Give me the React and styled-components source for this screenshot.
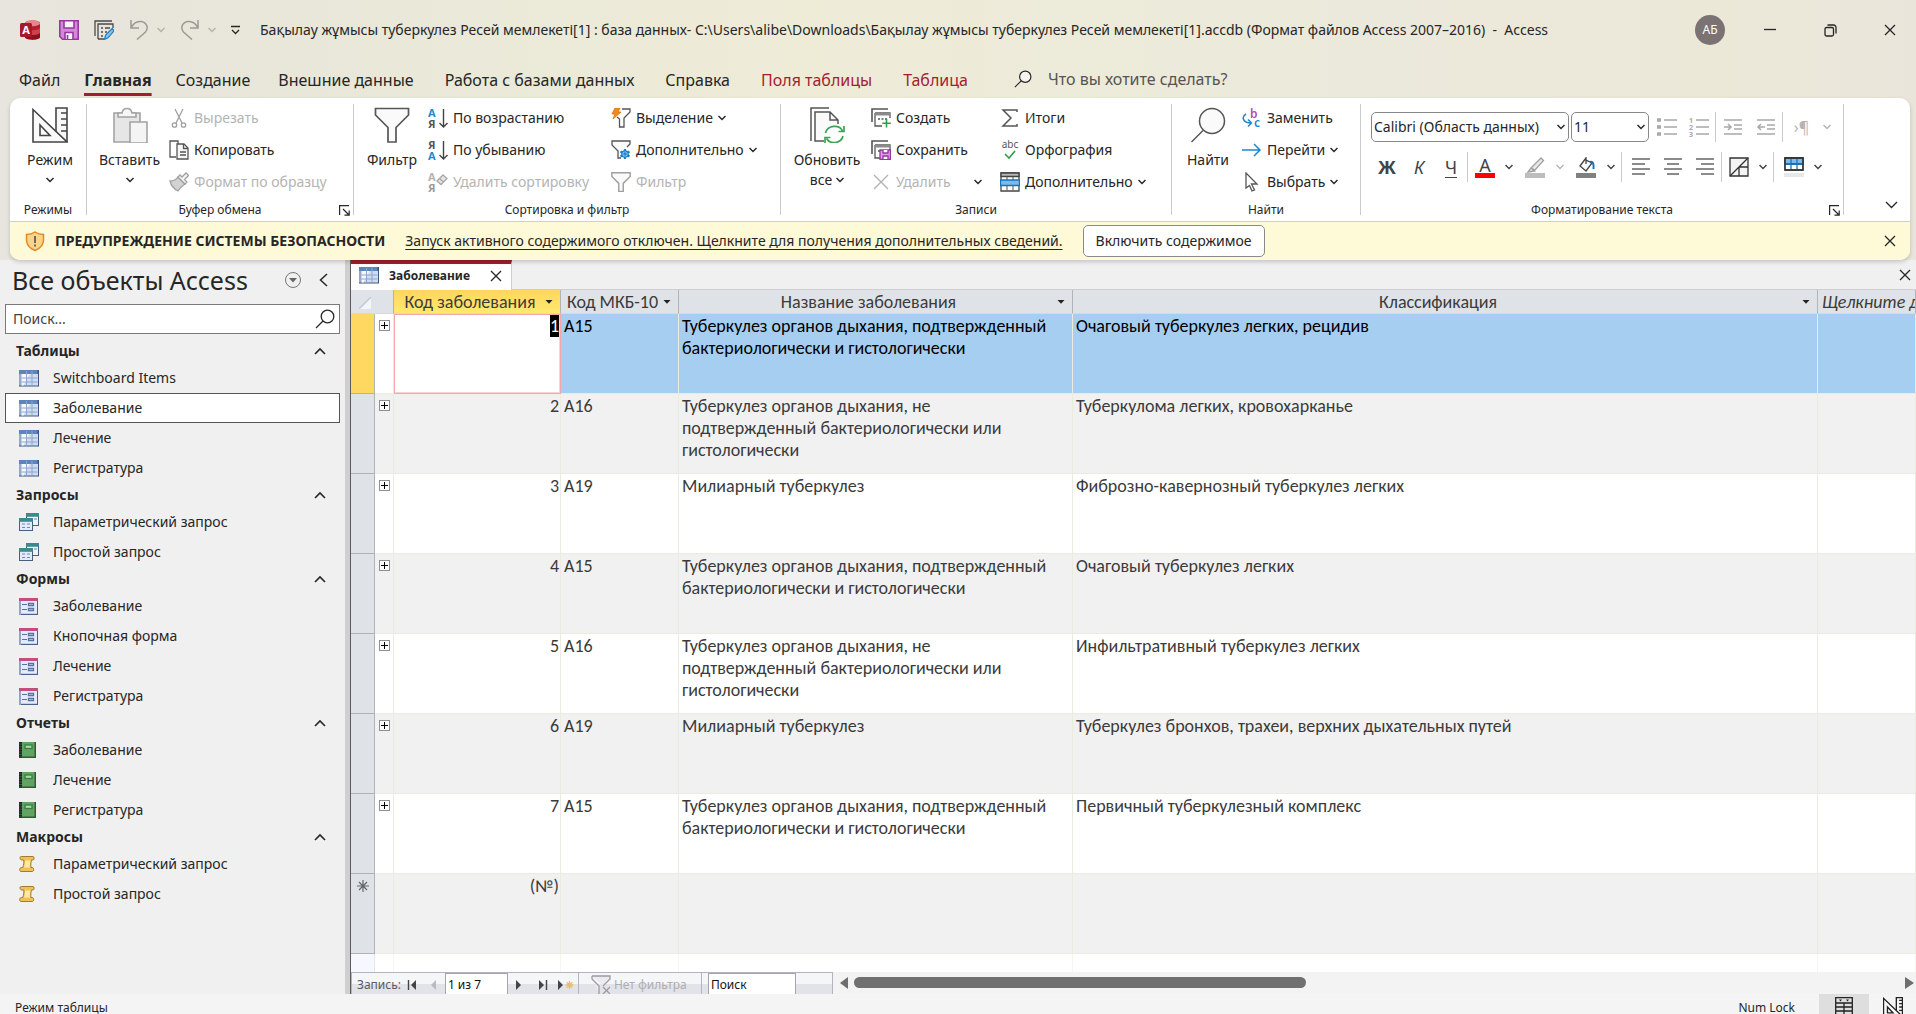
import React from "react";
import styled, { createGlobalStyle, css } from "styled-components";

const ui = '"Noto Sans", "Open Sans", sans-serif';
const dataFont = 'Carlito, Calibri, Lato, sans-serif';
const red = "#a31d2f";
const ink = "#262626";
const faint = "#b4b4b4";

const GlobalStyle = createGlobalStyle`
  *, *::before, *::after { box-sizing: border-box; }
  html, body { margin: 0; height: 100%; overflow: hidden; }
  body { font: 14px/20px ${ui}; color: ${ink}; background: #f0f0f0; }
  button, input, select { font: inherit; color: inherit; margin: 0; }
  button { border: 0; padding: 0; background: none; cursor: pointer; }
  ul { list-style: none; margin: 0; padding: 0; }
  h1, h2, p { margin: 0; }
  svg { display: block; flex: none; }
`;

const Window = styled.div`
  display: flex;
  flex-direction: column;
  height: 100vh;
  overflow: hidden;
`;

const Head = styled.header`
  background: linear-gradient(90deg, #e7e5dd 0%, #e9e7d9 16%, #eeecd7 42%, #ebe9db 72%, #ece8d8 90%, #e9e5da 100%);
`;

/* ---------- title bar ---------- */
const TitleBar = styled.div`
  display: flex;
  align-items: center;
  height: 60px;
  padding: 0 20px;
`;
const QuickBar = styled.div`
  display: flex;
  align-items: center;
  gap: 15px;
  width: 240px;
  flex: none;
  > svg { margin-right: 4px; }
`;
const UndoPair = styled.span`
  display: flex;
  align-items: center;
  gap: 8px;
`;
const PlainButton = styled.button`
  display: inline-flex;
  align-items: center;
  justify-content: center;
  color: ${(p) => (p.disabled ? faint : ink)};
`;
const Title = styled.h1`
  flex: 1;
  font-size: 14px;
  font-weight: 400;
  white-space: pre;
`;
const Avatar = styled.button`
  width: 30px;
  height: 30px;
  border-radius: 50%;
  background: #7b7373;
  color: #fff;
  font-size: 12px;
`;
const WindowButtons = styled.div`
  display: flex;
  align-items: center;
  margin-left: 15px;
  button { width: 60px; height: 40px; }
  button:last-child { justify-content: flex-end; width: 36px; }
`;

/* ---------- ribbon tabs ---------- */
const TabBar = styled.nav`
  display: flex;
  height: 38px;
  padding-left: 19px;
`;
const TabSet = styled.ul`
  display: flex;
  gap: ${(p) => p.$gap}px;
  margin-right: 28px;
`;
const Tab = styled.a`
  display: block;
  height: 36px;
  padding-top: 8px;
  font-size: 16px;
  line-height: 24px;
  text-decoration: none;
  color: ${(p) => (p.$context ? red : ink)};
  ${(p) =>
    p.$active &&
    css`
      font-weight: 700;
      background: linear-gradient(${red}, ${red}) bottom / 100% 3px no-repeat;
    `}
`;
const TellMe = styled.label`
  display: flex;
  align-items: center;
  gap: 16px;
  height: 38px;
  margin-left: 18px;
  input {
    width: 240px;
    border: 0;
    padding: 0;
    background: none;
    font-size: 16px;
    outline: 0;
  }
  input::placeholder { color: #555; opacity: 1; }
`;

/* ---------- ribbon ---------- */
const RibbonCard = styled.div`
  position: relative;
  z-index: 2;
  margin: 0 6px 0 10px;
  border-radius: 10px;
  background: #fff;
  box-shadow: 0 2px 4px rgba(0, 0, 0, 0.18);
  overflow: hidden;
`;
const Ribbon = styled.div`
  display: flex;
  height: 124px;
  padding: 6px 0;
  border-bottom: 1px solid #cfcfcf;
`;
const GroupBox = styled.section`
  display: flex;
  flex-direction: column;
  width: ${(p) => p.$w}px;
  flex: none;
  border-right: 1px solid #cbcbcb;
`;
const GroupBody = styled.div`
  display: flex;
  flex: none;
  height: 94px;
  padding-left: ${(p) => p.$pad || 0}px;
`;
const GroupFoot = styled.div`
  display: flex;
  align-items: center;
  flex: none;
  height: 24px;
  h2 {
    flex: 1;
    font-size: 12px;
    font-weight: 400;
    text-align: center;
  }
  button { margin: 0 3px 0 -14px; }
`;
const Big = styled.button`
  display: flex;
  flex-direction: column;
  align-items: center;
  width: ${(p) => p.$w}px;
  height: 94px;
  padding-top: 3px;
  flex: none;
  svg.pic { margin-bottom: 7px; }
  svg.drop { margin-top: 7px; }
`;
const Line = styled.span`
  display: flex;
  align-items: center;
  gap: 4px;
`;
const Stack = styled.div`
  display: flex;
  flex-direction: column;
  width: ${(p) => p.$w}px;
  flex: none;
  margin-top: -2px;
  ${Big} + & { margin-left: 7px; }
`;
const Small = styled.button`
  display: flex;
  align-items: center;
  gap: 5px;
  height: 32px;
  white-space: nowrap;
  color: ${(p) => (p.disabled ? faint : ink)};
  .end { margin-left: 18px; color: ${ink}; }
`;
const Muted = styled.span`
  color: ${faint};
`;
const FormatArea = styled.div`
  display: flex;
  flex-direction: column;
  gap: 10px;
  padding: 8px 0 0 10px;
`;
const FormatRow = styled.div`
  display: flex;
  align-items: center;
  height: 30px;
`;
const Picker = styled.label`
  position: relative;
  display: block;
  width: ${(p) => p.$w}px;
  height: 30px;
  margin-right: 2px;
  svg { position: absolute; right: 4px; top: 12px; pointer-events: none; }
  select {
    appearance: none;
    width: 100%;
    height: 30px;
    padding: 0 2px;
    border: 1px solid #888;
    border-radius: 5px;
    background: #fff;
  }
`;
const Tool = styled.button`
  display: flex;
  align-items: center;
  justify-content: center;
  width: ${(p) => p.$w || 32}px;
  height: 30px;
  color: ${(p) => (p.disabled ? faint : "#444")};
`;
const Rule = styled.span`
  width: 1px;
  height: 30px;
  background: #cbcbcb;
  margin: 0 ${(p) => p.$m || 0}px;
`;
const Glyph = styled.span`
  font-size: ${(p) => (p.$small ? 16 : 18)}px;
  line-height: 24px;
  font-weight: ${(p) => (p.$bold ? 700 : 400)};
  font-style: ${(p) => (p.$italic ? "italic" : "normal")};
  text-decoration: ${(p) => (p.$under ? "underline" : "none")};
  text-underline-offset: 3px;
`;
const Swatch = styled.span`
  display: flex;
  flex-direction: column;
  align-items: center;
  width: 20px;
  border-bottom: 5px solid ${(p) => p.$c};
  font-size: 18px;
  line-height: 16px;
`;
const RibbonEnd = styled.div`
  display: flex;
  flex: 1;
  align-items: flex-end;
  justify-content: flex-end;
  padding: 0 12px 6px 0;
`;
const Warning = styled.div`
  display: flex;
  align-items: center;
  height: 38px;
  padding: 0 14px 0 15px;
  background: #fef9d6;
  strong { margin: 0 20px 0 10px; }
  a { color: ${ink}; text-underline-offset: 3px; }
  > button:last-child { margin-left: auto; }
`;
const Enable = styled.button`
  height: 32px;
  margin-left: 20px;
  padding: 0 12px;
  border: 1px solid #8a8a8a;
  border-radius: 5px;
  background: #fff;
`;

/* ---------- body ---------- */
const Main = styled.main`
  display: flex;
  flex: 1;
  min-height: 0;
`;
const Sidebar = styled.aside`
  width: 351px;
  flex: none;
  padding: 0 5px;
  background: #f0f0f0;
  border-right: 1px solid #5c5c5c;
  box-shadow: inset -5px 0 #cfcfcf;
`;
const SideTitle = styled.div`
  display: flex;
  align-items: center;
  height: 44px;
  padding: 0 17px 4px 7px;
  gap: 18px;
  h2 {
    flex: 1;
    font-size: 25px;
    font-weight: 400;
    line-height: 34px;
  }
`;
const SideSearch = styled.label`
  display: flex;
  align-items: center;
  width: 335px;
  height: 30px;
  margin-bottom: 5px;
  padding: 0 4px 0 7px;
  border: 1px solid #7a7a7a;
  background: #fff;
  input {
    flex: 1;
    min-width: 0;
    border: 0;
    padding: 0;
    outline: 0;
  }
  input::placeholder { color: #444; opacity: 1; }
`;
const SideGroup = styled.button`
  display: flex;
  align-items: center;
  justify-content: space-between;
  width: 335px;
  height: 24px;
  padding: 0 14px 0 11px;
  font-weight: 700;
`;
const SideItem = styled.a`
  display: flex;
  align-items: center;
  gap: 14px;
  width: 335px;
  height: 30px;
  padding-left: 13px;
  border: 1px solid ${(p) => (p.$on ? "#555" : "transparent")};
  background: ${(p) => (p.$on ? "#fff" : "none")};
  color: ${ink};
  text-decoration: none;
`;

const Doc = styled.section`
  display: flex;
  flex-direction: column;
  flex: 1;
  min-width: 0;
  background: #fff;
`;
const DocTabs = styled.div`
  display: flex;
  justify-content: space-between;
  align-items: center;
  height: 30px;
  padding-right: 5px;
  background: #f0f0f0;
  border-bottom: 1px solid #cdcfd1;
`;
const DocTab = styled.div`
  display: flex;
  align-items: center;
  height: 30px;
  width: 161px;
  padding: 0 9px 2px 8px;
  border-top: 4px solid ${red};
  border-right: 1px solid #cdcfd1;
  background: #fff;
  font-size: 12px;
  font-weight: 700;
  span { flex: 1; margin-left: 10px; }
`;
const SheetArea = styled.div`
  flex: 1;
  min-height: 0;
  overflow: hidden;
`;
const Sheet = styled.table`
  width: 100%;
  table-layout: fixed;
  border-spacing: 0;
  font-family: ${dataFont};
  font-size: 18px;
  line-height: 22px;
  color: #3b3b3b;
`;
const HeadCell = styled.th`
  height: 24px;
  padding: 0;
  overflow: hidden;
  white-space: nowrap;
  font-weight: 400;
  font-style: ${(p) => (p.$add ? "italic" : "normal")};
  text-align: left;
  background: ${(p) => (p.$on ? "linear-gradient(#ffd65c, #ffe96f)" : "#dfe2e7")};
  border-right: 1px solid ${(p) => (p.$bare ? "transparent" : "#b0b3b9")};
  border-bottom: 1px solid #d9d9d6;
`;
const HeadButton = styled.button`
  display: flex;
  align-items: center;
  width: 100%;
  height: 23px;
  padding: 0 4px;
  line-height: 22px;
  font-style: inherit;
  span { flex: 1; text-align: ${(p) => (p.$start ? "left" : "center")}; }
`;
const Row = styled.tr`
  height: 80px;
  background: ${(p) => (p.$on ? "#a5cef1" : p.$alt ? "#f1f1f1" : "#fff")};
  color: ${(p) => (p.$on ? "#000" : "inherit")};
`;
const Cell = styled.td`
  height: 80px;
  padding: 1px ${(p) => (p.$num ? 1 : p.$wrap ? 16 : 3)}px 1px 3px;
  vertical-align: top;
  text-align: ${(p) => (p.$num ? "right" : "left")};
  border-right: 1px solid #ebebe0;
  border-bottom: 1px solid #ebebe0;
  ${(p) =>
    p.$focus &&
    css`
      background: #fff;
      border-color: #f4a6ab;
      box-shadow: inset 1px 1px #f4a6ab, inset -1px -1px #f9d0d3;
    `}
`;
const Selector = styled.td`
  height: 80px;
  padding: 6px;
  vertical-align: top;
  background: ${(p) => (p.$on ? "#ffd861" : "#dfe2e7")};
  border-right: 1px solid #aeb2b9;
  border-bottom: 1px solid #aeb2b9;
`;
const ExpandCell = styled(Cell)`
  padding: 6px 4px;
  background: ${(p) => (p.$alt ? "#f1f1f1" : "#fff")};
`;
const Expand = styled.button`
  display: block;
  width: 11px;
  height: 11px;
  border: 1px solid #8f8f8f;
  background:
    linear-gradient(#000, #000) center / 7px 1px no-repeat,
    linear-gradient(#000, #000) center / 1px 7px no-repeat, #fff;
`;
const Marked = styled.mark`
  display: inline-block;
  background: #000;
  color: #fff;
`;
const CornerBox = styled.span`
  display: flex;
  justify-content: flex-end;
  padding: 3px 3px 0 0;
`;
const RestRow = styled.tr`
  td {
    height: 18px;
    padding: 0;
    border-right: 1px solid #f6f6f1;
  }
  td:first-child { background: #f6f7ff; border-right-color: #e6e6e8; }
`;

const RecordBar = styled.div`
  display: flex;
  height: 22px;
  flex: none;
  overflow: hidden;
  background: #f3f3f3;
`;
const Records = styled.div`
  display: flex;
  width: 482px;
  flex: none;
  height: 24px;
  align-items: center;
  padding-left: 5px;
  border: 1px solid #b3b4bf;
  border-bottom: 0;
  background: linear-gradient(#f5f6f8 0 50%, #e2e3e8 50%);
  font-size: 12px;
  color: #5a5b63;
`;
const RecordInput = styled.input`
  width: ${(p) => p.$w}px;
  height: 23px;
  padding: 0 2px;
  border: 1px solid #a5a6ad;
  border-radius: 0;
  background: #fff;
  color: #111;
  margin-left: ${(p) => p.$ml}px;
`;
const NavButton = styled.button`
  display: flex;
  align-items: center;
  justify-content: center;
  width: ${(p) => p.$w}px;
  height: 20px;
`;
const NoFilter = styled.button`
  display: flex;
  align-items: center;
  gap: 3px;
  width: 124px;
  height: 24px;
  padding-left: 12px;
  border-left: 1px solid #b3b4bf;
  border-right: 1px solid #b3b4bf;
  color: #adadb2;
`;
const ScrollBar = styled.div`
  display: flex;
  align-items: center;
  justify-content: space-between;
  flex: 1;
  height: 21px;
  padding: 0 2px 0 7px;
`;
const Track = styled.div`
  flex: 1;
  padding-left: 6px;
`;
const Thumb = styled.div`
  width: 43%;
  height: 11px;
  border-radius: 6px;
  background: #707070;
`;
const StatusBar = styled.footer`
  display: flex;
  align-items: flex-start;
  height: 20px;
  flex: none;
  overflow: hidden;
  padding-left: 15px;
  background: #f4f4f4;
  font-size: 12px;
  line-height: 28px;
  div { display: flex; margin-left: auto; }
  span { margin-right: 24px; }
`;
const ViewButton = styled.button`
  display: flex;
  justify-content: center;
  width: 50px;
  height: 28px;
  padding-top: 3px;
  background: ${(p) => (p.$on ? "#dedede" : "none")};
  &:last-child { width: 47px; }
`;

/* ---------- drawings ---------- */
const Pic = ({ s = 20, w, h, children, ...rest }) => (
  <svg width={w || s} height={h || s} viewBox={`0 0 ${w || s} ${h || s}`} fill="none" stroke="currentColor" strokeWidth="1.3" aria-hidden="true" {...rest}>
    {children}
  </svg>
);
const Chevron = ({ up, ...rest }) => (
  <Pic w={8} h={6} strokeWidth="1.5" {...rest}>
    <path d={up ? "M1 5l3-3 3 3" : "M.5 1l3.500 3.500L7.500 1"} />
  </Pic>
);
const Cross = ({ s = 12 }) => (
  <Pic s={12} width={s} height={s}>
    <path d="M1 1l10 10M11 1L1 11" />
  </Pic>
);
const Launcher = () => (
  <Pic s={11} strokeWidth="1.2">
    <path d="M.6 10V.6H10M4 4l6 6M10.2 5.5v4.7H5.5" />
  </Pic>
);
const Magnifier = ({ s = 20 }) => (
  <Pic s={20} width={s} height={s}>
    <circle cx="12.5" cy="7.5" r="6.3" fill="#fafafa" fillOpacity=".6" />
    <path d="M8 12L1 19" />
  </Pic>
);
const BigFind = (p) => (
  <Pic s={36} stroke="#555" strokeWidth="1.500" {...p}>
    <circle cx="22" cy="14" r="12.500" fill="#fafafa" /><path d="M13 23.500L1.500 35" />
  </Pic>
);
const AccessLogo = () => (
  <Pic stroke="none">
    <path d="M5 3c0-3.500 15-3.500 15 0v14c0 3.500-15 3.500-15 0z" fill="#b2202f" />
    <ellipse cx="12.500" cy="3.200" rx="7.500" ry="3" fill="#e8848c" />
    <path d="M5 8c3 3 12 3 15 0v5c-3 3-12 3-15 0z" fill="#cf3f4d" />
    <path d="M5 13c3 3 12 3 15 0v4c0 3.500-15 3.500-15 0z" fill="#8c101d" />
    <rect x="0" y="3" width="12" height="14" rx="1.5" fill="#a6192a" />
    <text x="6" y="14" fontSize="11" fontWeight="700" fill="#fff" textAnchor="middle" fontFamily="Noto Sans">A</text>
  </Pic>
);
const Floppy = ({ s = 20 }) => (
  <Pic s={20} width={s} height={s} stroke="#9a35a5" strokeWidth="1.6">
    <path d="M.8.8h18.400v18.400H3.500L.8 16.500z" fill="#d08ad6" />
    <path d="M5 .8h10v7.200H5zM6 19v-6.500h8V19" fill="#f7f1f8" />
    <path d="M8.500 15v4" />
  </Pic>
);
const EditForm = () => (
  <Pic stroke="#4a4a4a">
    <path d="M1 16V1h17M4 19V4h15v4M4 19h6" />
    <path d="M7 8h2M11 8h5M7 12h2M11 12h2M7 16h2" />
    <path d="M10.500 19.300l1.200-4.300 6.500-6.500 1.800 2.300-6 7z" stroke="#1f7fc4" fill="#8cc6ef" />
  </Pic>
);
const Undo = ({ flip }) => (
  <Pic stroke="#9c9a94" strokeWidth="1.5" transform={flip ? "scale(-1 1)" : undefined}>
    <path d="M2 0v8h8M2 8C5 2 9 1 12.500 1.600c6 1.400 7 7 4 10.400L8 19.500" />
  </Pic>
);
const Customize = () => (
  <Pic w={9} h={10}>
    <path d="M0 1.500h9M1 5l3.500 3.500L8 5" />
  </Pic>
);
const MinIcon = () => <Pic s={12}><path d="M0 5.500h12" /></Pic>;
const RestoreIcon = () => (
  <Pic s={13}>
    <rect x="1" y="3.500" width="8.500" height="8.500" rx="1.500" />
    <path d="M3.500 1h6a2.500 2.500 0 0 1 2.500 2.500v6" />
  </Pic>
);
const DesignPic = ({ s = 36, c = "#444", ...rest }) => (
  <Pic s={36} width={s} height={s} stroke={c} strokeWidth={s > 20 ? 1.6 : 2.4} {...rest}>
    <path d="M24 25V1h11v34" fill="#f7f7f7" />
    <path d="M1 2.500V35h34z" fill="#fafafa" />
    <path d="M8 18v10.500h10zM29 6h6M29 12h6M29 18h6M29 24h6" />
  </Pic>
);
const PastePic = (p) => (
  <Pic s={36} stroke="#a3a3a3" strokeWidth="1.6" {...p}>
    <path d="M2 6h26v29H2z" fill="#e6e6e6" />
    <path d="M6 10V6h4c1-6 9-6 10 0h4v4z" fill="#f6f6f6" />
    <path d="M18 15h17v21H18z" fill="#f4f4f4" />
  </Pic>
);
const Scissors = () => (
  <Pic stroke="#a0a0a0">
    <path d="M6 1l7 14M14 1L7 15" />
    <circle cx="5.500" cy="17" r="2.200" /><circle cx="14.500" cy="17" r="2.200" />
  </Pic>
);
const CopyPic = () => (
  <Pic stroke="#555">
    <path d="M7 17H1V1h8v3" />
    <path d="M8 4h7l4 4v11H8z" fill="#f7f7f7" /><path d="M14.500 4v4.500H19M11 12h6M11 15h6" />
  </Pic>
);
const Brush = () => (
  <Pic stroke="#a0a0a0">
    <path d="M1 9c4 0 6-1 8-4l7 7c-3 2-5 4-7 7C5 17 2 13 1 9z" fill="#d2d2d2" />
    <path d="M9 5l7 7 2-2-2.500-2.500 4-4-2.500-2.500-4 4L11 3z" fill="#f4f4f4" />
  </Pic>
);
const Funnel = ({ s = 36, c = "#555", ...rest }) => (
  <Pic s={36} width={s} height={s} stroke={c} strokeWidth={s > 20 ? 1.7 : 2.6} {...rest}>
    <path d="M1.500 1.500h33V8L22 20.500V35h-8V20.500L1.500 8z" fill="#fafafa" />
  </Pic>
);
const SortPic = ({ top, bottom, clear }) => (
  <Pic stroke="none" fontFamily="Noto Sans" fontSize="11" fontWeight="700">
    <text x="0" y="8.500" fill={clear ? "#b4b4b4" : top === "А" ? "#1e88cf" : "#555"}>{top}</text>
    <text x="0" y="19.500" fill={clear ? "#9b9b9b" : bottom === "А" ? "#1e88cf" : "#555"}>{bottom}</text>
    {clear ? (
      <path d="M9 9l6-6 4 3.500-6 6zM11.500 6.500l4 3.500" stroke="#a8a8a8" strokeWidth="1.300" fill="#e6e6e6" />
    ) : (
      <path d="M15.500 1v18M11.500 15l4 4 4-4" stroke="#444" strokeWidth="1.400" />
    )}
  </Pic>
);
const SelectFilter = () => (
  <Pic stroke="#555">
    <path d="M11 1h8v3l-6 6v9H8.500v-8L6 9" fill="none" />
    <path d="M4 0h5L7 4h3L2 11l2-5H1z" fill="#f28a1c" stroke="#d96f06" strokeWidth=".8" />
  </Pic>
);
const Gear = ({ x, y }) => (
  <g transform={`translate(${x} ${y})`} stroke="#1e7fc8">
    <path d="M0-5v10M-4.500-2.500l9 5M-4.500 2.500l9-5" strokeWidth="2.200" />
    <circle r="3.200" fill="#8cc6ef" strokeWidth="1.300" /><circle r="1" fill="#fff" />
  </g>
);
const MoreFilter = () => (
  <Pic stroke="#555">
    <path d="M10 18H7v-7L1 5V1h18v3l-3 3" fill="#fafafa" />
    <Gear x={14} y={14} />
  </Pic>
);
const RefreshPic = (p) => (
  <Pic s={36} stroke="#555" strokeWidth="1.500" {...p}>
    <path d="M2 34V1h18" /><path d="M6 5h15l8 8v8c-8-3-15 4-14 13H6z" fill="#fafafa" stroke="none" />
    <path d="M15 34H6V5h15l8 8v4M21 5v8h8" />
    <g stroke="#3aa655" strokeWidth="1.700">
      <path d="M16.500 26c2-8 14-9 17-2M35 19v5.500h-5.500M34 29c-2 8-13 8.500-16.500 2.500M16 36v-5.500h5.500" />
    </g>
  </Pic>
);
const FormStack = ({ save }) => (
  <Pic stroke="#555">
    <path d="M1 14V1h16" strokeWidth="1.600" /><path d="M4 5h15v5M11 18H4V5" />
    <path d="M4 4.500h15v3H4z" fill="#8b8b8b" stroke="none" /><path d="M7 11h2M10.500 11h2M14 11h2" />
    {save ? (
      <g stroke="#9a35a5"><path d="M9 10h10.400v9.400H9z" fill="#d9a3de" /><path d="M12 10v3h5v-3M12 19v-3h5v3" fill="#fff" /></g>
    ) : (
      <path d="M15.500 11v8.500M11.300 15.300h8.500" stroke="#2f9e4c" strokeWidth="1.600" />
    )}
  </Pic>
);
const BigX = () => <Pic stroke="#b0b0b0"><path d="M3 3l14 14M17 3L3 17" /></Pic>;
const Sigma = () => <Pic stroke="#555" strokeWidth="1.500"><path d="M17 4V2H3l8 8-8 8h14v-2" /></Pic>;
const Spelling = () => (
  <Pic>
    <text x="10" y="8" fontSize="10" fill="#555" stroke="none" textAnchor="middle" fontFamily="Noto Sans">abc</text>
    <path d="M5 14l4 4 6-7" stroke="#2f9e4c" strokeWidth="1.600" />
  </Pic>
);
const MoreTable = () => (
  <Pic stroke="#444">
    <path d="M1 1h18v18H1z" fill="#fff" /><path d="M1 1h18v3.500H1z" fill="#b5b5b5" />
    <path d="M7 5v14M13 5v14" stroke="#777" /><path d="M.5 8h19v5.500H.5z" fill="#7db9ea" stroke="#1673bd" />
  </Pic>
);
const ReplacePic = () => (
  <Pic fontFamily="Noto Sans" fontWeight="600">
    <text x="8" y="10" fontSize="12" fill="#b24cba" stroke="none">b</text>
    <text x="12" y="19" fontSize="12" fill="#1e88cf" stroke="none">c</text>
    <path d="M4 6c-5 3-3 9 5 9M6 11.500l3.500 3.500L6 18.500" stroke="#1e88cf" strokeWidth="1.500" />
  </Pic>
);
const GoTo = () => <Pic stroke="#1e88cf" strokeWidth="1.500"><path d="M0 10h18M12 4l6 6-6 6" /></Pic>;
const Pointer = () => <Pic stroke="#555"><path d="M4 1l11 11H9.500l3 6-2.500 1-2.500-5.500L4 16z" /></Pic>;
const ListPic = ({ num }) => (
  <Pic stroke="#a8a8a8" strokeWidth="1.600">
    <path d="M7 3h13M7 10h13M7 17h13" />
    {num ? (
      <g fontSize="7" fontFamily="Noto Sans" fontWeight="700" fill="#a8a8a8" stroke="none">
        <text x="0" y="5.500">1</text><text x="0" y="12.500">2</text><text x="0" y="19.500">3</text>
      </g>
    ) : (
      <path d="M0 3h4M0 10h4M0 17h4" strokeWidth="3.500" />
    )}
  </Pic>
);
const IndentPic = ({ out }) => (
  <Pic stroke="#a8a8a8" strokeWidth="1.500">
    <path d="M1 3h18M11 8h8M11 12h8M1 17h18" />
    <path d={out ? "M9 10H2M5 7l-3 3 3 3" : "M1 10h7M5 7l3 3-3 3"} />
  </Pic>
);
const AlignPic = ({ d }) => <Pic stroke="#666" strokeWidth="1.500"><path d={d} /></Pic>;
const Marker = () => (
  <Pic h={16} w={20} stroke="#a0a0a0"><path d="M6 11L16 1l2.500 2.500L10 13zM3 15l3-4 3.500 3z" fill="#e8e8e8" /></Pic>
);
const Bucket = () => (
  <Pic h={16} w={20} stroke="#444"><path d="M10 1L4 9l6 5 6-8-6-3zM10 1v6" fill="#fafafa" /><path d="M14 5c3-1 4 2 3.500 7" stroke="#1673bd" strokeWidth="2" /></Pic>
);
const Gridlines = () => (
  <Pic stroke="#333"><path d="M1 1h18v18H1z" fill="#f4f4f4" /><path d="M1 19L19 1M10 10v9M10 10h9" /></Pic>
);
const AltRow = () => (
  <Pic stroke="#333"><path d="M1 1h18v12H1z" fill="#fff" /><path d="M1 1h18v6H1z" fill="#7db9ea" /><path d="M7 1v12M13 1v12M1 7h18" stroke="#1673bd" /><path d="M1 1h18v12H1z" /><path d="M0 18h20" stroke="#e8e8e8" strokeWidth="4" /></Pic>
);
const Shield = () => (
  <Pic w={20} h={20} stroke="#e08a24" strokeWidth="1.500">
    <path d="M10 1c2.500 1.800 5 2.500 8.500 2.500V9c0 5-3.500 8.500-8.500 10.500C5 17.500 1.500 14 1.500 9V3.500C5 3.500 7.500 2.800 10 1z" fill="#fad489" />
    <path d="M10 5v7M10 13.500v2" stroke="#555" strokeWidth="1.700" />
  </Pic>
);
const TablePic = () => (
  <Pic w={20} h={17} stroke="none">
    <rect x="0" y="0" width="20" height="16.500" fill="#3d577f" /><rect x="0" y="0" width="18.500" height="4" fill="#5f83bd" />
    <rect x="0" y="4" width="2.500" height="11.500" fill="#98a9c6" /><rect x="2.500" y="4" width="16.500" height="11.500" fill="#cfdcf3" />
    <path d="M2.500 4h8l-6 11.500h-2z" fill="#f4f8ff" /><path d="M7.500 1v14.500M13 1v14.500M2.500 8h16M2.500 12h16" stroke="#8ea6cf" strokeWidth="1" />
  </Pic>
);
const QueryPic = () => (
  <Pic w={20} h={18} stroke="none">
    <rect x="7" y="0" width="13" height="13" fill="#47607f" /><rect x="8" y="3.500" width="11" height="8.500" fill="#eef3fc" /><rect x="7" y="0" width="13" height="3.500" fill="#3b8a8c" />
    <rect x="0" y="5" width="14" height="13" fill="#47607f" /><rect x="1" y="8.500" width="12" height="8.500" fill="#e3ebfa" /><rect x="0" y="5" width="14" height="3.500" fill="#3b8a8c" />
    <path d="M3 11h3M8 11h3M3 14.500h3M8 14.500h3M15 6h3" stroke="#7189ad" strokeWidth="1.200" />
  </Pic>
);
const FormPic = () => (
  <Pic w={20} h={17} stroke="none">
    <rect width="19" height="17" fill="#4a6288" /><rect x="2" y="3" width="16" height="12.800" fill="#e3ebfc" /><rect y="2" width="2" height="15" fill="#93a5c6" /><rect width="19" height="3" fill="#c04f7c" />
    <path d="M3 6.500h5M3 11.500h5" stroke="#5a72a0" strokeWidth="1.200" /><path d="M9.500 5.500h5v2h-5zM9.500 10.500h5v2h-5z" stroke="#5a72a0" fill="#fff" />
  </Pic>
);
const ReportPic = () => (
  <Pic w={20} h={17} stroke="none">
    <rect width="17" height="16" fill="#2f5d33" /><rect x="3" width="12.500" height="14.500" fill="#62a364" /><path d="M1.500 0v16" stroke="#222" strokeWidth="3" strokeDasharray="1.600 1" />
    <rect x="6" y="3" width="7" height="3.500" fill="#a9dba6" stroke="#3d7c42" />
  </Pic>
);
const MacroPic = () => (
  <Pic w={20} h={17} stroke="#9a6f28" strokeWidth=".9">
    <path d="M1 1.500C1 .5 2 .5 3 .5h11c1.500 0 1.500 3.500 0 3.500h-1.500c-.5 2-1 5-.5 7.500h1.500c1.500 0 1.500 4 0 4H2c-1.800 0-1.800-4 .5-4h1.200C4.700 9 5 6.500 4.800 4H3C1.500 4 1 3 1 1.500z" fill="#efc257" />
    <path d="M6 4.500h5.500c-.6 2.500-.9 4.500-.6 7H5C5.800 9 6.200 7 6 4.500z" fill="#fde9a6" stroke="none" />
  </Pic>
);
const StarPic = ({ c = "#666", s = 12 }) => (
  <Pic s={12} width={s} height={s} stroke={c} strokeWidth="1.200"><path d="M6 0v12M0 6h12M2 2l8 8M10 2l-8 8" /></Pic>
);
const Arrow = ({ left, bar, star, c = "#444" }) => (
  <Pic w={star ? 17 : 11} h={10} stroke="none">
    <path d={left ? "M9 0v10L4 5z" : "M1 0v10l5-5z"} fill={c} />
    {bar && <path d={left ? "M1.500 0v10" : "M8.500 0v10"} stroke={c} strokeWidth="1.400" />}
    {star && <path d="M12.500 1v8M8.500 5h8M9.700 2.200l5.600 5.600M15.300 2.200L9.700 7.800" stroke="#e6bd74" strokeWidth="1.300" />}
  </Pic>
);
const HeadArrow = () => (
  <Pic w={14} h={6} stroke="none"><path d="M3.500 1h7L7 4.800z" fill="#222" /></Pic>
);
const Corner = () => <Pic s={12} stroke="none"><path d="M12 0v12H0z" fill="#f3f5f8" /><path d="M12 0L0 12" stroke="#b9c6dc" /></Pic>;
const SheetView = () => (
  <Pic w={18} h={20} stroke="#222"><path d="M.7.700h16.600v19H.7zM.7 6h16.600M.7 10h16.600M.7 14h16.600M9 6v14" /><path d="M4 2.500h3L5.500 4.500zM11 2.500h3l-1.500 2z" fill="#222" stroke="none" /></Pic>
);
const FilterOff = () => (
  <Pic stroke="#9b9ba0"><path d="M1 1h18v3l-7 7M8 19v-8L1 4V1" fill="#ececef" /><path d="M12 12l7 7M19 12l-7 7" /></Pic>
);

/* ---------- data ---------- */
const objects = [
  ["Таблицы", TablePic, ["Switchboard Items", "Заболевание", "Лечение", "Регистратура"]],
  ["Запросы", QueryPic, ["Параметрический запрос", "Простой запрос"]],
  ["Формы", FormPic, ["Заболевание", "Кнопочная форма", "Лечение", "Регистратура"]],
  ["Отчеты", ReportPic, ["Заболевание", "Лечение", "Регистратура"]],
  ["Макросы", MacroPic, ["Параметрический запрос", "Простой запрос"]],
];
const confirmed = "Туберкулез органов дыхания, подтвержденный бактериологически и гистологически";
const unconfirmed = "Туберкулез органов дыхания, не подтвержденный бактериологически или гистологически";
const rows = [
  [1, "A15", confirmed, "Очаговый туберкулез легких, рецидив"],
  [2, "A16", unconfirmed, "Туберкулома легких, кровохарканье"],
  [3, "A19", "Милиарный туберкулез", "Фиброзно-кавернозный туберкулез легких"],
  [4, "A15", confirmed, "Очаговый туберкулез легких"],
  [5, "A16", unconfirmed, "Инфильтративный туберкулез легких"],
  [6, "A19", "Милиарный туберкулез", "Туберкулез бронхов, трахеи, верхних дыхательных путей"],
  [7, "A15", confirmed, "Первичный туберкулезный комплекс"],
];

const Group = ({ name, w, pad, launcher, children }) => (
  <GroupBox $w={w}>
    <GroupBody $pad={pad}>{children}</GroupBody>
    <GroupFoot>
      <h2>{name}</h2>
      {launcher && <PlainButton aria-label={`${name}: параметры`}><Launcher /></PlainButton>}
    </GroupFoot>
  </GroupBox>
);

function TopBar() {
  return (
    <TitleBar>
      <QuickBar>
        <AccessLogo />
        <PlainButton aria-label="Сохранить"><Floppy /></PlainButton>
        <PlainButton aria-label="Форма"><EditForm /></PlainButton>
        <UndoPair>
          <PlainButton disabled aria-label="Отменить"><Undo /></PlainButton>
          <Chevron stroke="#b5b3ac" />
        </UndoPair>
        <UndoPair>
          <PlainButton disabled aria-label="Вернуть"><Undo flip /></PlainButton>
          <Chevron stroke="#b5b3ac" />
        </UndoPair>
        <PlainButton aria-label="Настройка панели"><Customize /></PlainButton>
      </QuickBar>
      <Title>{"Бақылау жұмысы туберкулез Ресей мемлекеті[1] : база данных- C:\\Users\\alibe\\Downloads\\Бақылау жұмысы туберкулез Ресей мемлекеті[1].accdb (Формат файлов Access 2007–2016)  -  Access"}</Title>
      <Avatar>АБ</Avatar>
      <WindowButtons>
        <PlainButton aria-label="Свернуть"><MinIcon /></PlainButton>
        <PlainButton aria-label="Восстановить"><RestoreIcon /></PlainButton>
        <PlainButton aria-label="Закрыть"><Cross /></PlainButton>
      </WindowButtons>
    </TitleBar>
  );
}

function Tabs() {
  return (
    <TabBar>
      <TabSet $gap={24}>
        <li><Tab href="#file">Файл</Tab></li>
        <li><Tab href="#home" $active>Главная</Tab></li>
        <li><Tab href="#create">Создание</Tab></li>
      </TabSet>
      <TabSet $gap={31}>
        <li><Tab href="#external">Внешние данные</Tab></li>
        <li><Tab href="#tools">Работа с базами данных</Tab></li>
        <li><Tab href="#help">Справка</Tab></li>
        <li><Tab href="#fields" $context>Поля таблицы</Tab></li>
        <li><Tab href="#table" $context>Таблица</Tab></li>
      </TabSet>
      <TellMe>
        <Magnifier s={18} />
        <input placeholder="Что вы хотите сделать?" aria-label="Что вы хотите сделать?" />
      </TellMe>
    </TabBar>
  );
}

function RibbonPanel() {
  return (
    <Ribbon>
      <Group name="Режимы" w={77}>
        <Big $w={80}><DesignPic className="pic" />Режим<Chevron className="drop" /></Big>
      </Group>
      <Group name="Буфер обмена" w={267} pad={10} launcher>
        <Big $w={65}><PastePic className="pic" />Вставить<Chevron className="drop" /></Big>
        <Stack $w={180}>
          <Small disabled><Scissors />Вырезать</Small>
          <Small><CopyPic />Копировать</Small>
          <Small disabled><Brush />Формат по образцу</Small>
        </Stack>
      </Group>
      <Group name="Сортировка и фильтр" w={427} pad={9}>
        <Big $w={58}><Funnel className="pic" />Фильтр</Big>
        <Stack $w={183}>
          <Small><SortPic top="А" bottom="Я" />По возрастанию</Small>
          <Small><SortPic top="Я" bottom="А" />По убыванию</Small>
          <Small disabled><SortPic top="А" bottom="Я" clear />Удалить сортировку</Small>
        </Stack>
        <Stack $w={160}>
          <Small><SelectFilter />Выделение<Chevron /></Small>
          <Small><MoreFilter />Дополнительно<Chevron /></Small>
          <Small disabled><Funnel s={20} c="#a0a0a0" />Фильтр</Small>
        </Stack>
      </Group>
      <Group name="Записи" w={391} pad={9}>
        <Big $w={74}><RefreshPic className="pic" />Обновить<Line>все<Chevron /></Line></Big>
        <Stack $w={129}>
          <Small><FormStack />Создать</Small>
          <Small><FormStack save />Сохранить</Small>
          <Small><BigX /><Muted>Удалить</Muted><Chevron className="end" /></Small>
        </Stack>
        <Stack $w={160}>
          <Small><Sigma />Итоги</Small>
          <Small><Spelling />Орфография</Small>
          <Small><MoreTable />Дополнительно<Chevron /></Small>
        </Stack>
      </Group>
      <Group name="Найти" w={189} pad={9}>
        <Big $w={54}><BigFind className="pic" />Найти</Big>
        <Stack $w={110}>
          <Small><ReplacePic />Заменить</Small>
          <Small><GoTo />Перейти<Chevron /></Small>
          <Small><Pointer />Выбрать<Chevron /></Small>
        </Stack>
      </Group>
      <Group name="Форматирование текста" w={483} launcher>
        <FormatArea>
          <FormatRow>
            <Picker $w={198}>
              <select aria-label="Шрифт"><option>Calibri (Область данных)</option></select>
              <Chevron />
            </Picker>
            <Picker $w={78}>
              <select aria-label="Размер шрифта"><option>11</option></select>
              <Chevron />
            </Picker>
            <Tool disabled aria-label="Маркеры"><ListPic /></Tool>
            <Tool disabled aria-label="Нумерация"><ListPic num /></Tool>
            <Rule />
            <Tool disabled $w={34} aria-label="Увеличить отступ"><IndentPic /></Tool>
            <Tool disabled aria-label="Уменьшить отступ"><IndentPic out /></Tool>
            <Rule />
            <Tool disabled $w={37} aria-label="Направление текста"><Glyph $small>›¶</Glyph></Tool>
            <Tool disabled $w={14} aria-label="Варианты направления"><Chevron /></Tool>
          </FormatRow>
          <FormatRow>
            <Tool aria-label="Полужирный"><Glyph $bold>Ж</Glyph></Tool>
            <Tool aria-label="Курсив"><Glyph $italic>К</Glyph></Tool>
            <Tool aria-label="Подчеркнутый"><Glyph $under>Ч</Glyph></Tool>
            <Rule />
            <Tool $w={34} aria-label="Цвет текста"><Swatch $c="#f00">A</Swatch></Tool>
            <Tool $w={14} aria-label="Варианты цвета текста"><Chevron /></Tool>
            <Tool $w={37} disabled aria-label="Выделение цветом"><Swatch $c="#bdbdbd"><Marker /></Swatch></Tool>
            <Tool $w={14} disabled aria-label="Варианты выделения"><Chevron /></Tool>
            <Tool $w={37} aria-label="Цвет фона"><Swatch $c="#808080"><Bucket /></Swatch></Tool>
            <Tool $w={14} aria-label="Варианты фона"><Chevron /></Tool>
            <Rule $m={3} />
            <Tool aria-label="По левому краю"><AlignPic d="M1 2h18M1 7h13M1 12h18M1 17h13" /></Tool>
            <Tool aria-label="По центру"><AlignPic d="M1 2h18M4 7h12M1 12h18M4 17h12" /></Tool>
            <Tool aria-label="По правому краю"><AlignPic d="M1 2h18M6 7h13M1 12h18M6 17h13" /></Tool>
            <Rule />
            <Tool $w={34} aria-label="Сетка"><Gridlines /></Tool>
            <Tool $w={14} aria-label="Варианты сетки"><Chevron /></Tool>
            <Rule $m={3} />
            <Tool $w={34} aria-label="Цвет чередования"><AltRow /></Tool>
            <Tool $w={14} aria-label="Варианты чередования"><Chevron /></Tool>
          </FormatRow>
        </FormatArea>
      </Group>
      <RibbonEnd>
        <PlainButton aria-label="Свернуть ленту"><Pic w={13} h={8}><path d="M1 1l5.500 5.500L12 1" /></Pic></PlainButton>
      </RibbonEnd>
    </Ribbon>
  );
}

function ObjectPane() {
  return (
    <Sidebar>
      <SideTitle>
        <h2>Все объекты Access</h2>
        <PlainButton aria-label="Меню">
          <Pic s={16} strokeWidth="1" stroke="#777"><circle cx="8" cy="8" r="7.500" /><path d="M4 6h8l-4 4.500z" fill="#666" stroke="none" /></Pic>
        </PlainButton>
        <PlainButton aria-label="Скрыть область"><Pic w={9} h={14} strokeWidth="1.500"><path d="M8 1L1.500 7 8 13" /></Pic></PlainButton>
      </SideTitle>
      <SideSearch>
        <input placeholder="Поиск..." aria-label="Поиск" />
        <Magnifier />
      </SideSearch>
      {objects.map(([name, Icon, items]) => (
        <section key={name}>
          <SideGroup>{name}<Pic w={12} h={8} strokeWidth="1.600"><path d="M1 7l5-5 5 5" /></Pic></SideGroup>
          <ul>
            {items.map((item) => (
              <li key={item}>
                <SideItem href="#object" $on={name === "Таблицы" && item === "Заболевание"}><Icon />{item}</SideItem>
              </li>
            ))}
          </ul>
        </section>
      ))}
    </Sidebar>
  );
}

const Column = ({ children, on, add }) => (
  <HeadCell $on={on} $add={add} scope="col">
    <HeadButton $start={add}><span>{children}</span>{!add && <HeadArrow />}</HeadButton>
  </HeadCell>
);

function DataSheet() {
  return (
    <SheetArea>
      <Sheet>
        <colgroup>
          <col width="24" /><col width="19" /><col width="167" /><col width="118" /><col width="394" /><col width="745" /><col />
        </colgroup>
        <thead>
          <tr>
            <HeadCell $bare><CornerBox><Corner /></CornerBox></HeadCell>
            <HeadCell />
            <Column on>Код заболевания</Column>
            <Column>Код МКБ-10</Column>
            <Column>Название заболевания</Column>
            <Column>Классификация</Column>
            <Column add>Щелкните для добавления</Column>
          </tr>
        </thead>
        <tbody>
          {rows.map(([id, code, name, kind], i) => {
            const on = i === 0;
            const alt = i % 2 === 1;
            return (
              <Row key={id} $on={on} $alt={alt}>
                <Selector $on={on} />
                <ExpandCell $alt={alt}><Expand aria-label="Развернуть" /></ExpandCell>
                <Cell $num $focus={on}>{on ? <Marked>{id}</Marked> : id}</Cell>
                <Cell>{code}</Cell>
                <Cell $wrap>{name}</Cell>
                <Cell>{kind}</Cell>
                <Cell />
              </Row>
            );
          })}
          <Row $alt>
            <Selector><StarPic /></Selector>
            <Cell /><Cell $num>(№)</Cell><Cell /><Cell /><Cell /><Cell />
          </Row>
          <RestRow><td /><td /><td /><td /><td /><td /><td /></RestRow>
        </tbody>
      </Sheet>
    </SheetArea>
  );
}

export default function App() {
  return (
    <Window>
      <GlobalStyle />
      <Head>
        <TopBar />
        <Tabs />
        <RibbonCard>
          <RibbonPanel />
          <Warning>
            <Shield />
            <strong>ПРЕДУПРЕЖДЕНИЕ СИСТЕМЫ БЕЗОПАСНОСТИ</strong>
            <a href="#details">Запуск активного содержимого отключен. Щелкните для получения дополнительных сведений.</a>
            <Enable>Включить содержимое</Enable>
            <PlainButton aria-label="Закрыть сообщение"><Cross /></PlainButton>
          </Warning>
        </RibbonCard>
      </Head>
      <Main>
        <ObjectPane />
        <Doc>
          <DocTabs>
            <DocTab>
              <TablePic /><span>Заболевание</span>
              <PlainButton aria-label="Закрыть вкладку"><Cross /></PlainButton>
            </DocTab>
            <PlainButton aria-label="Закрыть документ"><Cross /></PlainButton>
          </DocTabs>
          <DataSheet />
          <RecordBar>
            <Records>
              <span>Запись:</span>
              <NavButton $w={24} aria-label="Первая запись"><Arrow left bar /></NavButton>
              <NavButton $w={16} aria-label="Предыдущая запись"><Arrow left c="#b9bac0" /></NavButton>
              <RecordInput $w={63} $ml={4} defaultValue="1 из 7" aria-label="Номер записи" />
              <NavButton $w={26} aria-label="Следующая запись"><Arrow /></NavButton>
              <NavButton $w={20} aria-label="Последняя запись"><Arrow bar /></NavButton>
              <NavButton $w={24} aria-label="Новая запись"><Arrow star /></NavButton>
              <NoFilter><FilterOff />Нет фильтра</NoFilter>
              <RecordInput $w={88} $ml={6} defaultValue="Поиск" aria-label="Поиск записи" />
            </Records>
            <ScrollBar>
              <Pic w={8} h={12} stroke="none"><path d="M8 0v12L0 6z" fill="#6e6e6e" /></Pic>
              <Track><Thumb /></Track>
              <Pic w={9} h={12} stroke="none"><path d="M0 0v12l9-6z" fill="#6e6e6e" /></Pic>
            </ScrollBar>
          </RecordBar>
        </Doc>
      </Main>
      <StatusBar>
        Режим таблицы
        <div>
          <span>Num Lock</span>
          <ViewButton $on aria-label="Режим таблицы"><SheetView /></ViewButton>
          <ViewButton aria-label="Конструктор"><DesignPic s={20} c="#222" /></ViewButton>
        </div>
      </StatusBar>
    </Window>
  );
}
